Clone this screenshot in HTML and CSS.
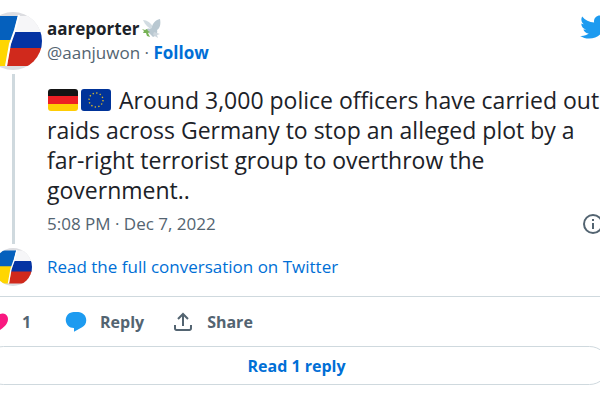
FILE: index.html
```html
<!DOCTYPE html>
<html lang="en">
<head>
    <meta charset="UTF-8">
    <meta name="viewport" content="width=device-width, initial-scale=1.0">
    <title>aareporter on Twitter</title>
    <link rel="stylesheet" href="styles.css">
</head>
<body>
    <svg class="defs" width="0" height="0" aria-hidden="true">
        <symbol id="flags" viewBox="0 0 58 58">
            <clipPath id="round"><circle cx="29" cy="29" r="29"/></clipPath>
            <g clip-path="url(#round)">
                <rect width="58" height="58" fill="#dcdde1"/>
                <path d="M0 4h34l-5 25H0z" fill="#0560bd"/>
                <path d="M0 28h29l-6 26H0z" fill="#ffd600"/>
                <path d="M34 4h24v16H30z" fill="#f6f6f8"/>
                <path d="M31 20h27v17H25z" fill="#0433a3"/>
                <path d="M26 36h32v18H23z" fill="#d0291c"/>
                <path d="M35 3l-4 15-5 14-4 22" fill="none" stroke="#fff" stroke-width="2"/>
            </g>
        </symbol>
    </svg>

    <article class="tweet">
        <header class="header">
            <div class="rail">
                <svg class="avatar" role="img" aria-label="aareporter"><use href="#flags"/></svg>
                <div class="thread"></div>
            </div>
            <div class="main">
                <div class="top">
                    <div class="author">
                        <div class="name">
                            <a href="#">aareporter</a>
                            <svg class="dove" viewBox="0 0 20 20" aria-hidden="true">
                                <path d="M10 11C7 9 3 6 1 1c4 0 8 3 10 7z" fill="#d2dce2"/>
                                <path d="M10 9c0-4 3-8 8-9 1 5 0 9-3 11 1 3-1 6-4 7l-5-5-3-1c1-2 3-3 5-2z" fill="#b9c8d1"/>
                                <path d="M12 13l6 2-3 1 1 3-5-3z" fill="#ccd6dd"/>
                                <path d="M0 10l3 1 2-1 1 2 2 1-2 1 2 4-3-1-1-3-3 0 1-2z" fill="#77b255"/>
                            </svg>
                        </div>
                        <div class="handle"><a href="#">@aanjuwon</a> · <a class="follow" href="#">Follow</a></div>
                    </div>
                    <a class="logo" href="#" aria-label="Twitter">
                        <svg viewBox="0 0 24 24"><path d="M23.643 4.937c-.835.37-1.732.62-2.675.733.962-.576 1.7-1.49 2.048-2.578-.9.534-1.897.922-2.958 1.13-.85-.904-2.06-1.47-3.4-1.47-2.572 0-4.658 2.086-4.658 4.66 0 .364.042.718.12 1.06-3.873-.195-7.304-2.05-9.602-4.868-.4.69-.63 1.49-.63 2.342 0 1.616.823 3.043 2.072 3.878-.764-.025-1.482-.234-2.11-.583v.06c0 2.257 1.605 4.14 3.737 4.568-.392.106-.803.162-1.227.162-.3 0-.593-.028-.877-.082.593 1.85 2.313 3.198 4.352 3.234-1.595 1.25-3.604 1.995-5.786 1.995-.376 0-.747-.022-1.112-.065 2.062 1.323 4.51 2.093 7.14 2.093 8.57 0 13.255-7.098 13.255-13.254 0-.2-.005-.402-.014-.602.91-.658 1.7-1.477 2.323-2.41z"/></svg>
                    </a>
                </div>
                <p class="text"><svg class="flag" viewBox="0 0 30 22" role="img" aria-label="Germany"><clipPath id="fc"><rect width="30" height="22" rx="3"/></clipPath><g clip-path="url(#fc)"><path d="M0 0h30v8H0z" fill="#141414"/><path d="M0 7h30v8H0z" fill="#ed1f24"/><path d="M0 15h30v7H0z" fill="#ffcd05"/></g></svg><svg class="flag" viewBox="0 0 30 22" role="img" aria-label="European Union"><rect width="30" height="22" rx="3" fill="#039"/><circle cx="15" cy="11" r="7" fill="none" stroke="#d9bb2c" stroke-width="1.4" stroke-dasharray="1.3 2.365"/></svg> Around 3,000 police officers have carried out raids across Germany to stop an alleged plot by a far-right terrorist group to overthrow the government..</p>
                <div class="meta">
                    <a href="#">5:08 PM · Dec 7, 2022</a>
                    <a class="info" href="#" aria-label="Twitter Ads info and privacy">
                        <svg viewBox="0 0 22 22"><circle cx="11" cy="11" r="9" fill="none" stroke="#536471" stroke-width="2"/><path d="M10 10h2v6h-2zM10 6h2v2h-2z"/></svg>
                    </a>
                </div>
            </div>
        </header>

        <div class="conversation">
            <svg class="avatar-small" aria-hidden="true"><use href="#flags"/></svg>
            <a href="#">Read the full conversation on Twitter</a>
        </div>

        <div class="actions">
            <button type="button" aria-label="Like">
                <svg class="like" viewBox="0 0 24 24"><path d="M20.884 13.19c-1.351 2.48-4.001 5.12-8.379 7.67l-.503.3-.504-.3c-4.379-2.55-7.029-5.19-8.382-7.67-1.36-2.5-1.41-4.86-.514-6.67.887-1.79 2.647-2.91 4.601-3.01 1.651-.09 3.368.56 4.798 2.01 1.429-1.45 3.146-2.1 4.796-2.01 1.954.1 3.714 1.22 4.601 3.01.896 1.81.846 4.17-.514 6.67z"/></svg>
                <span class="count">1</span>
            </button>
            <button type="button">
                <svg class="reply" viewBox="0 0 24 24"><path d="M1.751 10c0-4.42 3.584-8 8.005-8h4.366c4.49 0 8.129 3.64 8.129 8.13 0 2.96-1.607 5.68-4.196 7.11l-8.054 4.46v-3.69h-.067c-4.49.1-8.183-3.51-8.183-8.01z"/></svg>
                <span>Reply</span>
            </button>
            <button type="button">
                <svg class="share" viewBox="0 0 24 24"><path d="M12 2.59l5.7 5.7-1.41 1.42L13 6.41V16h-2V6.41l-3.3 3.3-1.41-1.42L12 2.59zM21 15l-.02 3.51c0 1.38-1.12 2.49-2.5 2.49H5.5C4.11 21 3 19.88 3 18.5V15h2v3.5c0 .28.22.5.5.5h12.98c.28 0 .5-.22.5-.5L19 15h2z"/></svg>
                <span>Share</span>
            </button>
        </div>

        <a class="replies" href="#">Read 1 reply</a>
    </article>
</body>
</html>
```

FILE: styles.css
```css
body {
    margin: 0;
    background-color: #fff;
    color: #1c2228;
    font-family: "Segoe UI", "Open Sans", "Noto Sans", sans-serif;
    font-size: 17px;
    line-height: 24px;
    overflow: hidden;
}

a {
    color: inherit;
    text-decoration: none;
}

svg {
    display: block;
    flex: none;
}

.defs {
    position: absolute;
}

/* the card bleeds past both sides of the window */
.tweet {
    margin: 0 -9px 0 -16px;
    padding-top: 12px;
}

.header {
    display: flex;
    gap: 5px;
}

.rail {
    display: flex;
    flex-direction: column;
    align-items: center;
    gap: 4px;
}

.avatar {
    width: 58px;
    height: 58px;
}

.thread {
    flex: 1;
    width: 3px;
    background-color: #cfd9de;
}

.main {
    flex: 1;
    min-width: 0;
}

.top {
    display: flex;
    justify-content: space-between;
    align-items: flex-start;
}

.author {
    padding-top: 5px;
}

.name {
    display: flex;
    align-items: center;
    gap: 3px;
    font-weight: 700;
}

.dove {
    width: 20px;
    height: 20px;
}

.handle {
    color: #536471;
}

.follow {
    color: #006fd6;
    font-weight: 700;
}

.logo svg {
    width: 30px;
    height: 30px;
    fill: #1d9bf0;
}

.text {
    margin: 20px 0 7px;
    font-size: 23px;
    line-height: 30px;
}

.flag {
    display: inline-block;
    width: 30px;
    height: 22px;
    margin: 0 2px 0 1px;
    vertical-align: -2px;
}

.meta {
    display: flex;
    justify-content: space-between;
    align-items: center;
    padding: 0 5px 8px 0;
    color: #536471;
}

.info svg {
    width: 22px;
    height: 22px;
    fill: #536471;
}

.conversation {
    display: flex;
    align-items: center;
    gap: 15px;
    padding: 4px 0 10px 10px;
    color: #006fd6;
}

.avatar-small {
    width: 38px;
    height: 38px;
}

.actions {
    display: flex;
    align-items: center;
    gap: 27px;
    padding: 13px 0 12px 2px;
    border-top: 1px solid #cfd9de;
}

.actions button {
    display: flex;
    align-items: center;
    gap: 12px;
    padding: 0;
    border: none;
    background: none;
    color: #536471;
    font: inherit;
    font-size: 16px;
    font-weight: 700;
    cursor: pointer;
}

.actions svg {
    width: 24px;
    height: 24px;
}

.count {
    min-width: 15px;
    text-align: left;
}

.like {
    fill: #f91880;
}

.reply {
    fill: #1d9bf0;
}

.share {
    fill: #536471;
}

.replies {
    display: block;
    padding: 7px 0 6px;
    border: 1px solid #cfd9de;
    border-radius: 20px;
    color: #006fd6;
    font-size: 16px;
    font-weight: 700;
    text-align: center;
}
```
